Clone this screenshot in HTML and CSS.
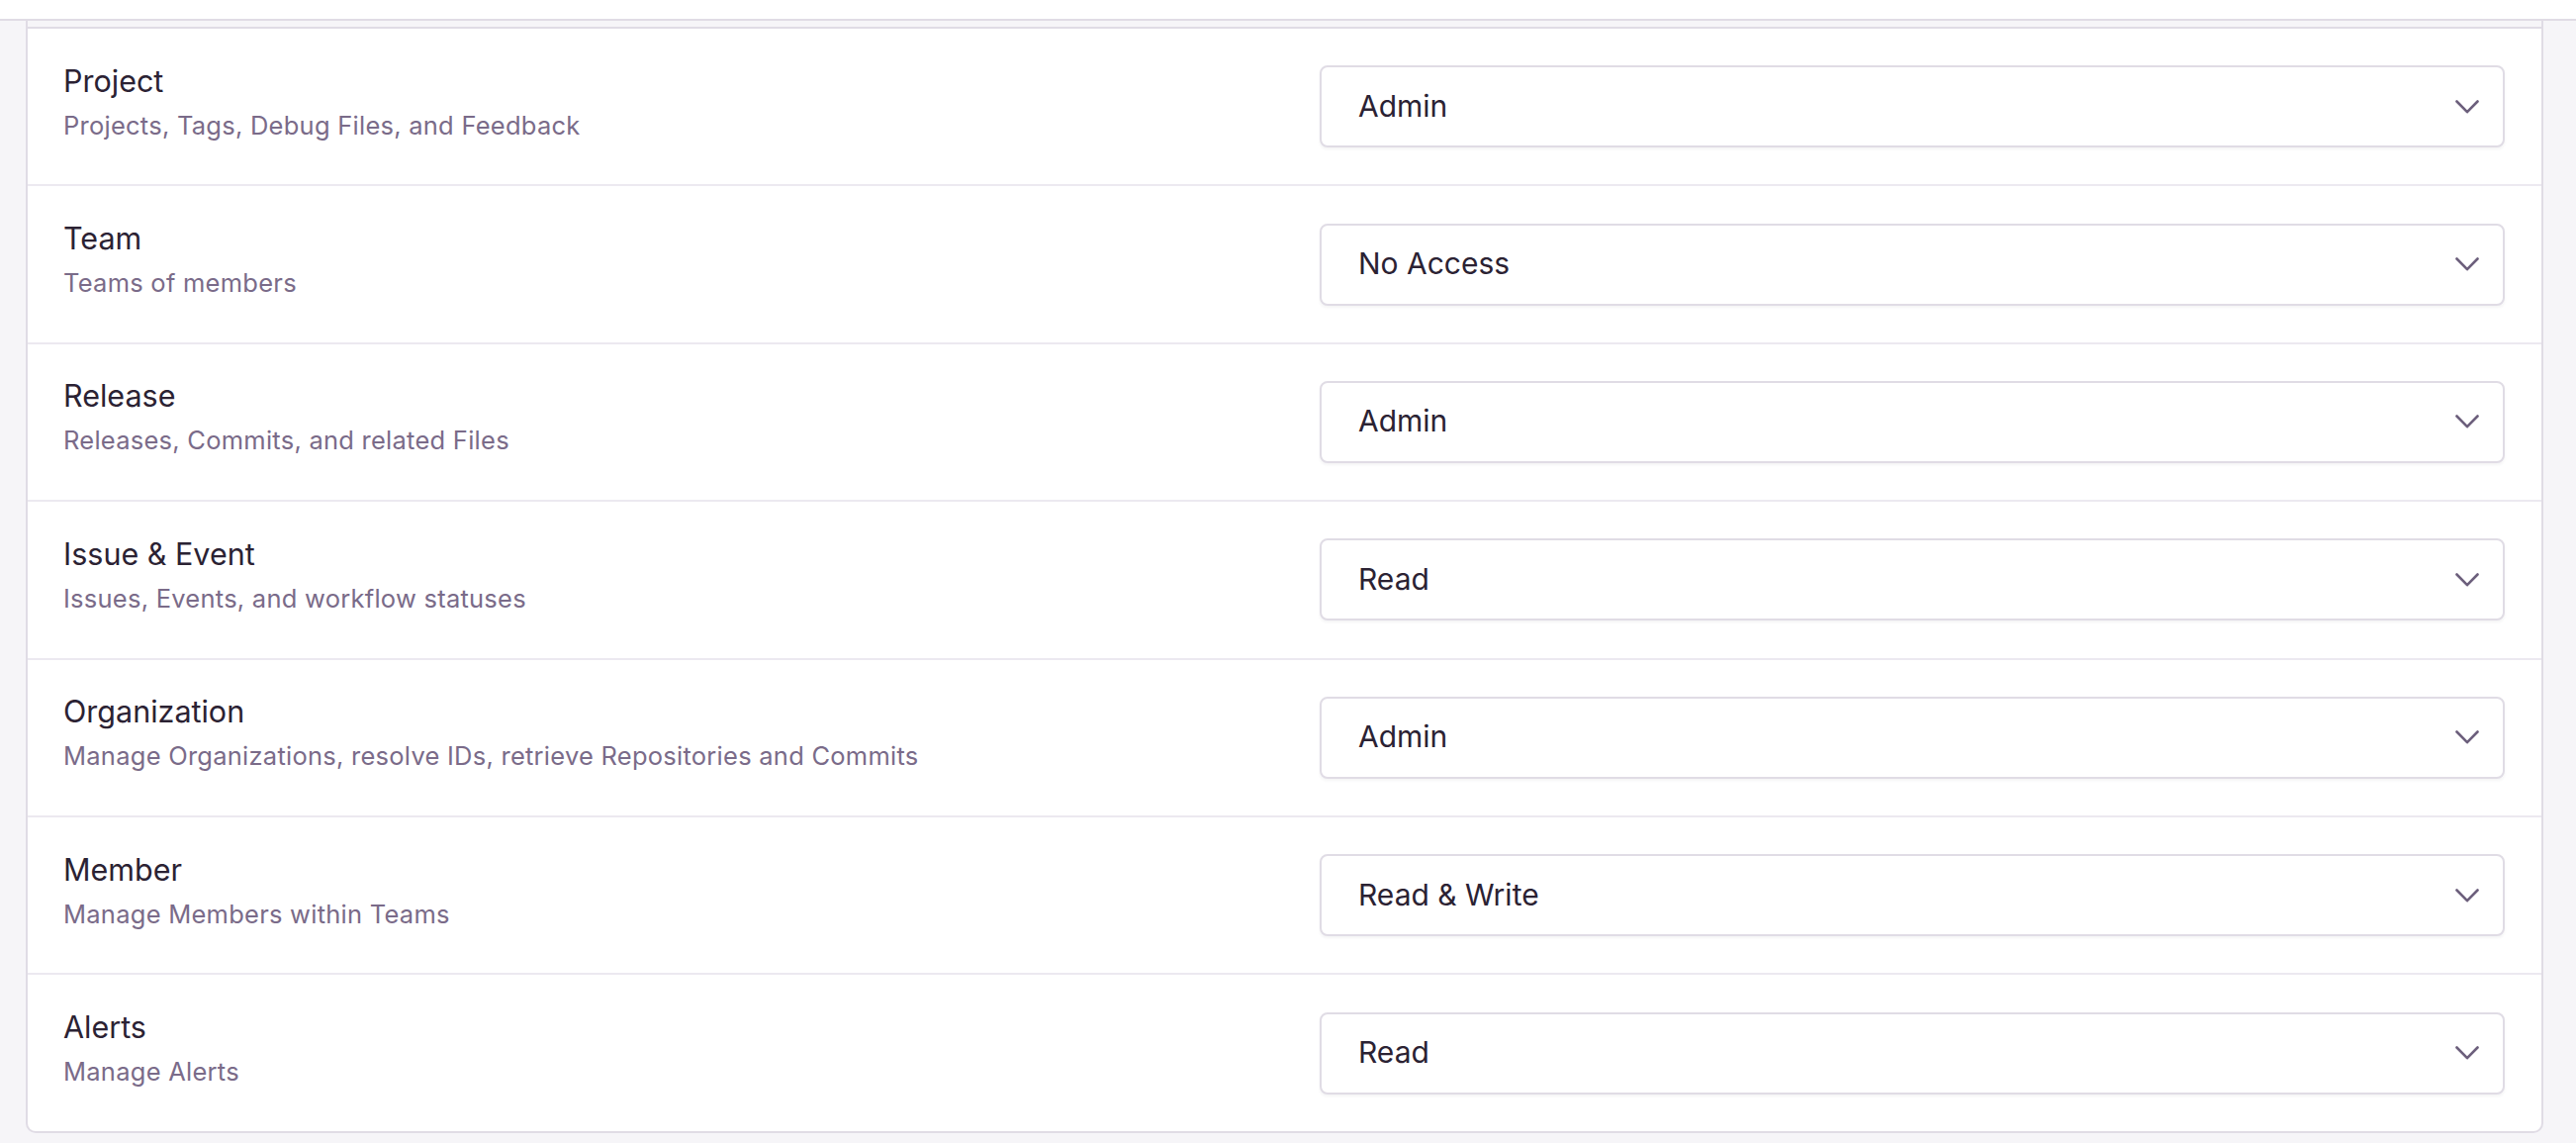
FILE: index.html
```html
<!DOCTYPE html>
<html lang="en">
<head>
<meta charset="utf-8">
<title>Permissions</title>
<link rel="stylesheet" href="styles.css">
</head>
<body>
<div class="topbar"></div>
<main class="main">
  <section class="panel">
    <div class="panel-header"></div>

    <div class="perm-row">
      <div class="perm-label">
        <div class="perm-title">Project</div>
        <div class="perm-desc">Projects, Tags, Debug Files, and Feedback</div>
      </div>
      <div class="select"><span class="select-value">Admin</span><svg class="chevron" viewBox="0 0 24 14" width="24" height="14"><polyline points="1.5,1.5 12,12.2 22.5,1.5"/></svg></div>
    </div>

    <div class="perm-row">
      <div class="perm-label">
        <div class="perm-title">Team</div>
        <div class="perm-desc">Teams of members</div>
      </div>
      <div class="select"><span class="select-value">No Access</span><svg class="chevron" viewBox="0 0 24 14" width="24" height="14"><polyline points="1.5,1.5 12,12.2 22.5,1.5"/></svg></div>
    </div>

    <div class="perm-row">
      <div class="perm-label">
        <div class="perm-title">Release</div>
        <div class="perm-desc">Releases, Commits, and related Files</div>
      </div>
      <div class="select"><span class="select-value">Admin</span><svg class="chevron" viewBox="0 0 24 14" width="24" height="14"><polyline points="1.5,1.5 12,12.2 22.5,1.5"/></svg></div>
    </div>

    <div class="perm-row">
      <div class="perm-label">
        <div class="perm-title">Issue &amp; Event</div>
        <div class="perm-desc">Issues, Events, and workflow statuses</div>
      </div>
      <div class="select"><span class="select-value">Read</span><svg class="chevron" viewBox="0 0 24 14" width="24" height="14"><polyline points="1.5,1.5 12,12.2 22.5,1.5"/></svg></div>
    </div>

    <div class="perm-row">
      <div class="perm-label">
        <div class="perm-title">Organization</div>
        <div class="perm-desc">Manage Organizations, resolve IDs, retrieve Repositories and Commits</div>
      </div>
      <div class="select"><span class="select-value">Admin</span><svg class="chevron" viewBox="0 0 24 14" width="24" height="14"><polyline points="1.5,1.5 12,12.2 22.5,1.5"/></svg></div>
    </div>

    <div class="perm-row">
      <div class="perm-label">
        <div class="perm-title">Member</div>
        <div class="perm-desc">Manage Members within Teams</div>
      </div>
      <div class="select"><span class="select-value">Read &amp; Write</span><svg class="chevron" viewBox="0 0 24 14" width="24" height="14"><polyline points="1.5,1.5 12,12.2 22.5,1.5"/></svg></div>
    </div>

    <div class="perm-row">
      <div class="perm-label">
        <div class="perm-title">Alerts</div>
        <div class="perm-desc">Manage Alerts</div>
      </div>
      <div class="select"><span class="select-value">Read</span><svg class="chevron" viewBox="0 0 24 14" width="24" height="14"><polyline points="1.5,1.5 12,12.2 22.5,1.5"/></svg></div>
    </div>
  </section>
</main>
</body>
</html>
```

FILE: styles.css
```css
html, body {
  margin: 0;
  padding: 0;
}

body {
  background: #f6f5f8;
  font-family: Inter, "Noto Sans", "DejaVu Sans", sans-serif;
  color: #2b2233;
  height: 1155px;
  overflow: hidden;
}

.topbar {
  height: 19px;
  background: #ffffff;
  border-bottom: 2px solid #e0dce5;
}

.main {
  padding: 0 33px 0 26px;
}

.panel {
  background: #ffffff;
  border: 2px solid #e0dce5;
  border-top: none;
  border-radius: 0 0 10px 10px;
  overflow: hidden;
}

.panel-header {
  height: 6px;
  background: #f6f5f8;
  border-bottom: 2px solid #e0dce5;
}

.perm-row {
  box-sizing: border-box;
  height: 159.4px;
  padding: 0 37px 0 36px;
  display: grid;
  grid-template-columns: 1fr 1fr;
  column-gap: 72px;
  align-items: center;
  border-bottom: 2px solid #ece9f0;
}

.perm-row:last-child {
  border-bottom: none;
  height: 157.4px;
}

.perm-label {
  display: flex;
  flex-direction: column;
  padding-bottom: 10px;
}

.perm-title {
  font-size: 30.5px;
  line-height: 40px;
  color: #2b2233;
}

.perm-desc {
  margin-top: 8px;
  font-size: 25.5px;
  line-height: 34px;
  letter-spacing: 0.25px;
  color: #7a6b89;
}

.select {
  box-sizing: border-box;
  height: 83px;
  border: 2px solid #e0dce5;
  border-radius: 8px;
  background: #ffffff;
  box-shadow: 0 2px 3px rgba(43, 34, 51, 0.05);
  display: flex;
  align-items: center;
  justify-content: space-between;
  padding: 0 24px 2px 37px;
}

.select-value {
  font-size: 30px;
  line-height: 40px;
  color: #2b2233;
}

.chevron {
  display: block;
  fill: none;
  stroke: #6c5f7c;
  stroke-width: 2.6;
  stroke-linecap: round;
  stroke-linejoin: round;
  margin-top: 2px;
}
```
